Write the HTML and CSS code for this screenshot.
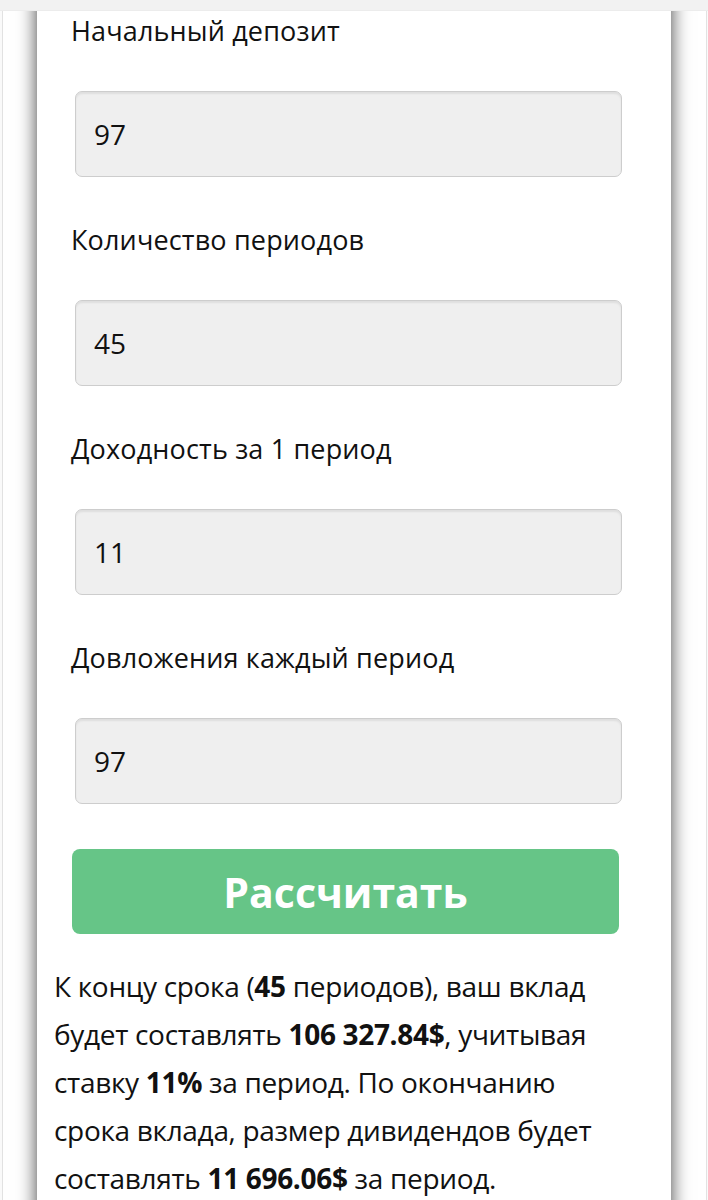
FILE: index.html
```html
<!DOCTYPE html>
<html lang="ru">
<head>
    <meta charset="UTF-8">
    <meta name="viewport" content="width=device-width, initial-scale=1.0">
    <title>Калькулятор сложного процента</title>
    <link rel="stylesheet" href="styles.css">
</head>
<body>
    <div class="topbar"></div>
    <div class="page">
        <div class="calculator">
            <form class="calc-form">
                <div class="field">
                    <label for="deposit">Начальный депозит</label>
                    <input type="text" id="deposit" value="97">
                </div>
                <div class="field">
                    <label for="periods">Количество периодов</label>
                    <input type="text" id="periods" value="45">
                </div>
                <div class="field">
                    <label for="rate">Доходность за 1 период</label>
                    <input type="text" id="rate" value="11">
                </div>
                <div class="field">
                    <label for="addition">Довложения каждый период</label>
                    <input type="text" id="addition" value="97">
                </div>
                <button type="button" class="btn-calc">Рассчитать</button>
            </form>
            <p class="result">
                К концу срока (<b>45</b> периодов), ваш вклад будет составлять <b>106&nbsp;327.84$</b>, учитывая ставку <b>11%</b> за период. По окончанию срока вклада, размер дивидендов будет составлять <b>11&nbsp;696.06$</b> за период.
            </p>
        </div>
    </div>
</body>
</html>
```

FILE: styles.css
```css
body {
    margin: 0;
    font-family: "Open Sans", "Noto Sans", sans-serif;
    color: #111;
    background: #fafafa;
}

.topbar {
    height: 10px;
    background: #f2f2f2;
    border-bottom: 1px solid #ececec;
}

.page {
    margin: 0 1px 0 2px;
    border-left: 1px solid #e2e2e2;
    border-right: 1px solid #e2e2e2;
    background: #fff;
    padding-left: 34px;
    overflow: hidden;
    height: 1189px;
}

.calculator {
    width: 634px;
    min-height: 1300px;
    margin-top: -20px;
    padding-top: 22px;
    background: #fff;
    box-shadow: 0 0 18px rgba(0, 0, 0, 0.75);
}

.calc-form {
    padding: 0 49px 0 34px;
}

.field {
    margin-bottom: 45px;
}

.field label {
    display: block;
    font-size: 27px;
    line-height: 36px;
    letter-spacing: 0.15px;
    margin-bottom: 42px;
}

.field input {
    display: block;
    box-sizing: border-box;
    width: 547px;
    height: 86px;
    margin-left: 4px;
    padding: 0 18px;
    font-family: inherit;
    font-size: 28px;
    color: #111;
    background: #efefef;
    border: 1px solid #cdcdcd;
    border-radius: 7px;
    box-shadow: inset 0 2px 2px rgba(0, 0, 0, 0.07);
}

.btn-calc {
    display: block;
    width: 547px;
    height: 85px;
    margin-left: 1px;
    font-family: inherit;
    font-size: 41px;
    font-weight: 700;
    color: #fff;
    background: #66c587;
    border: none;
    border-radius: 8px;
    cursor: pointer;
}

.result {
    margin: 28px 0 0;
    padding: 0 56px 0 17px;
    font-size: 28px;
    line-height: 48px;
    letter-spacing: -0.32px;
}

.result b {
    font-weight: 700;
}
```
